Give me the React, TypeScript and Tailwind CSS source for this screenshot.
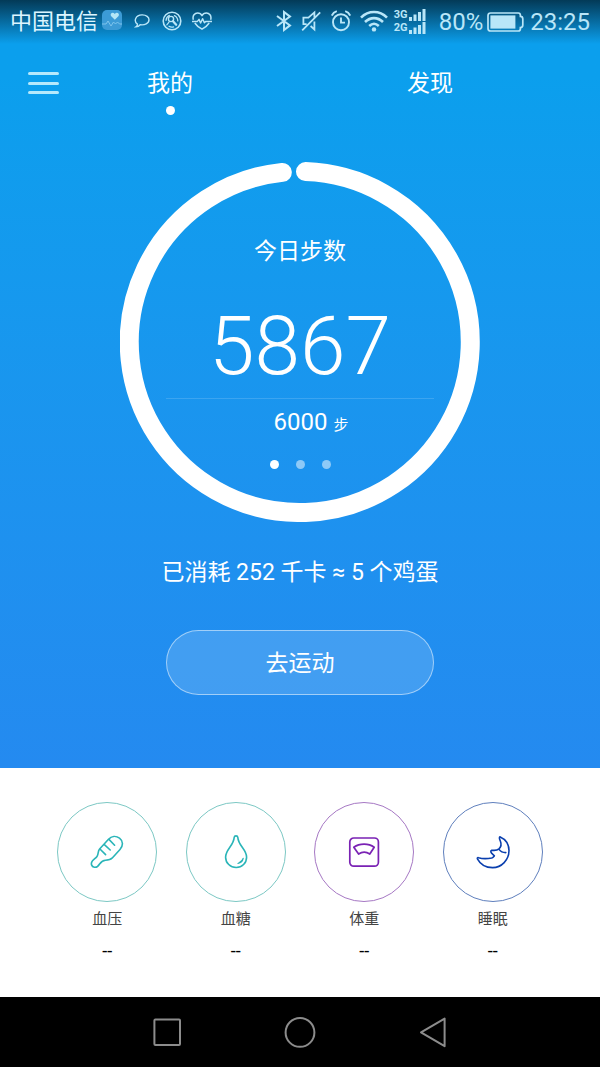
import React from "react";

type Metric = {
  label: string;
  value: string;
  ring: string;
  icon: React.ReactNode;
};

const metrics: Metric[] = [
  { label: "血压", value: "--", ring: "border-[#7cc8c4] text-[#2ab5b8]", icon: <ThermometerIcon /> },
  { label: "血糖", value: "--", ring: "border-[#7cc8c4] text-[#2ab5b8]", icon: <DropIcon /> },
  { label: "体重", value: "--", ring: "border-[#a678c4] text-[#7a22b4]", icon: <ScaleIcon /> },
  { label: "睡眠", value: "--", ring: "border-[#5f7fbd] text-[#0a3fae]", icon: <MoonIcon /> },
];

function ThermometerIcon() {
  return (
    <svg width="34" height="34" viewBox="0 0 34 34" fill="none" stroke="currentColor" strokeWidth="1.6" strokeLinecap="round" strokeLinejoin="round">
      <path d="M9.6 14 18.5 4.3C21.5 1 26 0.6 29.5 3.2C33.2 6 33.4 10.8 30 14.5L22.5 22.8C20.5 25 18.5 25.2 15.5 25.2C12.5 25.3 11.2 26.8 9.6 29C8.2 31.4 6.6 32.6 4.4 32.2C1.4 31.6 0.6 28.6 2.2 26.2C3.2 24.4 5.4 23.6 7 21.5C8.6 19.4 7.6 16.4 9.6 14Z" />
      <path d="M10.2 14.2 15.6 19.6M14.4 9.6 20.2 15M19.2 4.6 24.6 10.2" />
    </svg>
  );
}

function DropIcon() {
  return (
    <svg width="34" height="34" viewBox="0 0 34 34" fill="none" stroke="currentColor" strokeWidth="1.6" strokeLinecap="round" strokeLinejoin="round">
      <path d="M15.2 2.4C15.4 0.4 18.6 0.4 18.8 2.4C19.4 11 27.6 14.4 27.6 22.2C27.6 28 23 32.5 17.2 32.5C11.4 32.5 6.6 28 6.6 22.2C6.6 14.4 14.6 11 15.2 2.4Z" />
      <path d="M24.2 23.4C23.6 26.4 21.6 28 19 28.4C20.6 27.4 23.2 26.4 24.2 23.4Z" strokeWidth="1.2" />
    </svg>
  );
}

function ScaleIcon() {
  return (
    <svg width="34" height="34" viewBox="0 0 34 34" fill="none" stroke="currentColor" strokeWidth="1.7" strokeLinecap="round" strokeLinejoin="round">
      <rect x="2.8" y="3" width="28.6" height="28.2" rx="4" />
      <path d="M6.8 12.2C12.6 8 21.6 8 27.2 12.2L22.8 19C19.4 16.6 15 16.6 11.6 19Z" />
    </svg>
  );
}

function MoonIcon() {
  return (
    <svg width="34" height="34" viewBox="0 0 34 34" fill="none" stroke="currentColor" strokeWidth="1.6" strokeLinecap="round" strokeLinejoin="round">
      <path d="M23.8 1.8C29.6 4.4 33 9.6 33 15.6C33 25 25.6 32.6 16.6 32.6C10 32.6 4.2 29 1.4 23.8C1 22.8 1.6 22.4 2.6 22.8C7.4 24.2 11.6 23.8 15.8 23C17 22.6 17.6 21.8 18.4 20.8L15.8 18.4C14.6 17 14.4 15.8 15.8 15.2C18.6 15.6 21.2 15.4 23 13.8C25.4 11.4 25.4 8.6 24.4 6.2C23.6 4.4 23 2.4 23.8 1.8Z" />
      <path d="M23 14.4C24.6 16.6 26.8 17.6 29.8 17.6" />
    </svg>
  );
}

function SignalBars() {
  return (
    <svg width="17" height="12" viewBox="0 0 17 12" fill="currentColor">
      <path d="M0 8h3v4H0zM4.5 5.5h3V12h-3zM9 3h3v9H9zM13.5 0h3v12h-3z" />
    </svg>
  );
}

const StatusBar = () => {
  return (
    <div className="flex h-11 items-center bg-linear-to-b from-[#033a57] to-[#0b9eea]/0 px-[10px] text-[#b9e6f8]">
      <span className="text-[22px] leading-6 text-[#dcf5ff]">中国电信</span>
      <svg className="ml-1 -mt-1" width="20" height="20" viewBox="0 0 20 20">
        <rect width="20" height="20" rx="5" fill="#3c9bd6" />
        <path d="M12.8 9.8 9 6C7.6 3.8 10.8 1.4 12.8 4C14.8 1.4 18 3.8 16.6 6Z" fill="#b5e6f6" />
        <path d="M0 14h4l2-3 3 5 2.5-4 2 2 2-2 2 2H20" fill="none" stroke="#84c8ee" strokeWidth="0.9" />
      </svg>
      <svg className="ml-3 -mt-0.5" width="16" height="14" viewBox="0 0 16 14" fill="none" stroke="currentColor" strokeWidth="1.4">
        <path d="M3.4 10.1C-0.6 7 1.4 1.2 8 0.9C12.4 0.8 15 3.2 15 5.8C15 9.4 10.6 11.4 6.2 10.7C5 12.2 3.4 12.8 2 12.8C3.2 12 3.6 11.2 3.4 10.1Z" />
      </svg>
      <svg className="ml-3 -mt-0.5" width="20" height="20" viewBox="0 0 20 20" fill="none" stroke="currentColor" strokeLinecap="round">
        <circle cx="10" cy="10" r="8.8" strokeWidth="1.6" />
        <circle cx="9" cy="8" r="2.6" strokeWidth="1.4" />
        <path d="M11 10.2 14.2 13.8" strokeWidth="2.2" />
        <path d="M4.8 13.8 7 11.2M4 9.4A6 6 0 0 1 7.4 4.4M11.6 15.8A6 6 0 0 1 7 15.2M15.8 10A6 6 0 0 0 12.4 4.6" strokeWidth="1.2" />
      </svg>
      <svg className="ml-[10px] -mt-0.5" width="20" height="18" viewBox="0 0 20 18" fill="none" stroke="currentColor" strokeWidth="1.5" strokeLinejoin="round">
        <path d="M1.4 7.8C0 3.6 3 1 5.6 1C7.6 1 9.2 2 10 3.6C10.8 2 12.4 1 14.4 1C17 1 20 3.6 18.6 7.8M2.8 11C4.4 13.4 7 15.6 10 17.2C13 15.6 15.6 13.4 17.2 11" />
        <path d="M0 9.4H5.4L7 7.4 8.6 11 10.6 6.8 12.4 10.8 13.6 9.4H20" />
      </svg>

      <div className="ml-auto flex items-center">
        <svg className="-mt-0.5" width="16" height="22" viewBox="0 0 16 22" fill="none" stroke="currentColor" strokeWidth="2">
          <path d="M1 6 14 15.4 8 20V2L14 6.6 1 16" />
        </svg>
        <svg className="ml-[9px] -mt-0.5" width="20" height="22" viewBox="0 0 20 22" fill="none" stroke="currentColor" strokeWidth="1.8">
          <path d="M7.4 7.6 13.4 2.4V7.6M13.4 11.4V19.4L9.6 16M5.6 14.2H2.4V7.6H8M19.2 2.4 1.2 20.4" />
        </svg>
        <svg className="ml-[10px] -mt-0.5" width="20" height="22" viewBox="0 0 20 22" fill="none" stroke="currentColor" strokeWidth="1.9">
          <circle cx="10" cy="12.2" r="8" />
          <path d="M10 7.4V12.6H14M0.8 5.6C1.8 3.4 3.4 2 5.8 1.2M19.2 5.6C18.2 3.4 16.6 2 14.2 1.2" />
        </svg>
        <svg className="ml-[9px] -mt-0.5" width="28" height="22" viewBox="0 0 28 22" fill="none" stroke="currentColor" strokeWidth="2.6">
          <path d="M1 7.6C8.4 0.2 19.6 0.2 27 7.6M5 12C10.4 6.8 17.6 6.8 23 12M9.2 16C12.2 13.2 15.8 13.2 18.8 16" />
          <circle cx="14" cy="19.4" r="2.2" fill="currentColor" stroke="none" />
        </svg>
        <div className="ml-[6px] -mt-0.5 grid gap-[1px] text-[11px] font-bold leading-3">
          <div className="flex"><span className="w-[15px]">3G</span><SignalBars /></div>
          <div className="flex"><span className="w-[15px]">2G</span><SignalBars /></div>
        </div>
        <span className="ml-[13px] text-2xl leading-6">80%</span>
        <svg className="ml-1 -mt-px" width="37" height="20" viewBox="0 0 37 20" fill="none" stroke="currentColor" strokeWidth="1.7">
          <path d="M3.6 1H31.4Q33.4 1 33.4 3.6V4.4Q35.8 4.4 35.8 7V13Q35.8 15.6 33.4 15.6V16.4Q33.4 19 31.4 19H3.6Q1 19 1 16.4V3.6Q1 1 3.6 1Z" />
          <rect x="3.4" y="3.4" width="25" height="13.2" fill="currentColor" stroke="none" />
        </svg>
        <span className="ml-[6px] text-2xl leading-6">23:25</span>
      </div>
    </div>
  );
};

const Header = () => {
  return (
    <header className="flex h-[78px] items-start px-7 pt-6">
      <button aria-label="菜单" className="mt-1 grid h-[22px] w-[31px] content-between">
        <span className="h-[3px] rounded-full bg-[#b5e9fc]" />
        <span className="h-[3px] rounded-full bg-[#b5e9fc]" />
        <span className="h-[3px] rounded-full bg-[#b5e9fc]" />
      </button>
      <nav className="flex flex-1 items-start justify-between pl-[88px] pr-[119px] text-[23px] leading-8">
        <a href="#mine" className="flex flex-col items-center gap-[6px]">
          我的
          <span className="size-[9px] rounded-full bg-white" />
        </a>
        <a href="#discover">发现</a>
      </nav>
    </header>
  );
};

const StepRing = () => {
  return (
    <section className="relative mx-auto mt-10 flex size-[360px] flex-col items-center pt-[74px]">
      <svg className="absolute inset-0" width="360" height="360" viewBox="0 0 360 360" fill="none">
        <path d="M185.5 9.6A170.5 170.5 0 1 1 162.3 10.4" stroke="#fff" strokeWidth="19" strokeLinecap="round" />
      </svg>
      <h1 className="text-[23px] leading-8">今日步数</h1>
      <p className="mt-9 text-[82px] font-light leading-[84px]">5867</p>
      <hr className="mt-[10px] w-[268px] border-white/15" />
      <p className="mt-[7px] pl-[22px] text-2xl leading-8">
        6000 <span className="text-[15px]">步</span>
      </p>
      <div className="mt-[19px] flex gap-[17px]">
        <span className="size-[9px] rounded-full bg-white" />
        <span className="size-[9px] rounded-full bg-white/50" />
        <span className="size-[9px] rounded-full bg-white/50" />
      </div>
    </section>
  );
};

const Metrics = () => {
  return (
    <section className="grid grid-cols-4 bg-white px-[43px] pb-[34px] pt-[34px]">
      {metrics.map((m) => (
        <a key={m.label} href={`#${m.label}`} className="flex flex-col items-center">
          <span className={`flex size-[100px] items-center justify-center rounded-full border ${m.ring}`}>
            {m.icon}
          </span>
          <span className="mt-[5px] text-[15px] leading-6 text-[#444]">{m.label}</span>
          <span className="mt-2 text-lg leading-6 text-black">{m.value}</span>
        </a>
      ))}
    </section>
  );
};

const SystemNav = () => {
  return (
    <div className="grid h-[70px] grid-cols-3 place-items-center bg-black px-[100px] text-[#8c8c8c]">
      <button aria-label="最近任务">
        <svg width="32" height="32" viewBox="0 0 32 32" fill="none" stroke="currentColor" strokeWidth="2">
          <rect x="3.4" y="3.4" width="25.6" height="25.6" rx="1" />
        </svg>
      </button>
      <button aria-label="主屏幕">
        <svg width="32" height="32" viewBox="0 0 32 32" fill="none" stroke="currentColor" strokeWidth="2">
          <circle cx="16" cy="16.4" r="14.4" />
        </svg>
      </button>
      <button aria-label="返回">
        <svg width="32" height="32" viewBox="0 0 32 32" fill="none" stroke="currentColor" strokeWidth="2" strokeLinejoin="round">
          <path d="M4 16.4 27.6 2.6V30.2Z" />
        </svg>
      </button>
    </div>
  );
};

const App = () => {
  return (
    <div className="flex min-h-screen flex-col bg-white font-[Roboto,'Noto_Sans_CJK_SC',sans-serif]">
      <main className="bg-linear-to-b from-[#0b9fed] from-10% to-[#248af0] pb-[73px] text-white">
        <StatusBar />
        <Header />
        <StepRing />
        <p className="mt-[35px] text-center text-[23px] leading-8">已消耗 252 千卡 ≈ 5 个鸡蛋</p>
        <button className="mx-auto mt-[41px] block h-[65px] w-[268px] rounded-full border border-white/50 bg-white/15 pt-1 text-[23px]">
          去运动
        </button>
      </main>
      <Metrics />
      <SystemNav />
    </div>
  );
};

export default App;
